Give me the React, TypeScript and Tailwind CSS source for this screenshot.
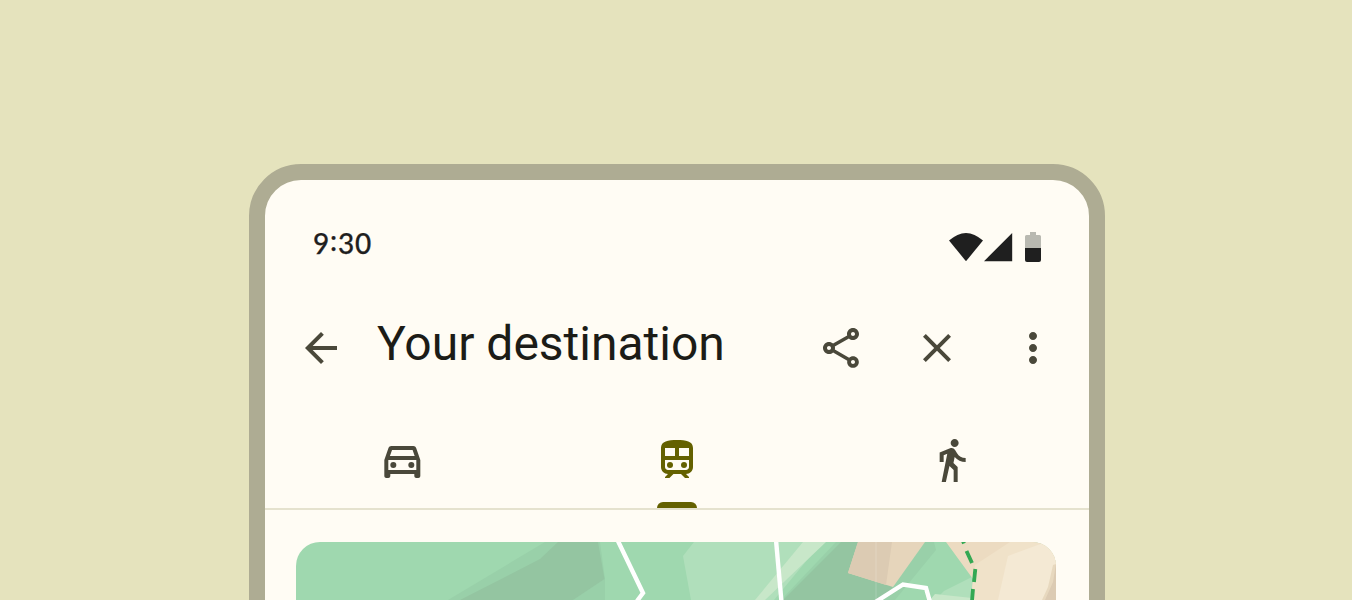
import type { ReactNode } from "react";

function Icon({ children, className = "" }: { children: ReactNode; className?: string }) {
  return (
    <svg viewBox="0 0 24 24" fill="currentColor" className={`size-12 shrink-0 ${className}`}>
      {children}
    </svg>
  );
}

function StatusBar() {
  return (
    <div className="flex h-[132px] items-start justify-between pt-[51px] pr-[47px] pl-12">
      <span className="-mt-[2px] font-['Lato','Roboto',sans-serif] text-[28px] leading-[28px] font-medium tracking-[0.8px] text-[#1f1f1f] [-webkit-text-stroke:0.25px_#1f1f1f]">
        9<span className="inline-block -translate-y-[3px]">:</span>30
      </span>
      <svg viewBox="948 231 94 32" className="h-8 w-[94px]">
        <path d="M949 240.6Q966 225.2 983 240.6L966 261.2Z" fill="#1f1f1f" />
        <path d="M1012.2 233V261.2H984Z" fill="#1f1f1f" />
        <path d="M1030 232H1036V235H1039.5Q1041 235 1041 236.5V248H1025V236.5Q1025 235 1026.5 235H1030Z" fill="#b9b9b1" />
        <path d="M1025 248H1041V260Q1041 262 1039 262H1027Q1025 262 1025 260Z" fill="#1f1f1f" />
      </svg>
    </div>
  );
}

function AppBar() {
  return (
    <div className="flex h-[72px] items-center px-8 text-[#4a483a]">
      <Icon>
        <path d="M20 11H7.83l5.59-5.59L12 4l-8 8 8 8 1.41-1.41L7.83 13H20v-2z" />
      </Icon>
      <h1 className="mb-[9px] ml-8 flex-1 font-['Roboto',sans-serif] text-[48px] leading-[56px] font-normal whitespace-nowrap text-[#1c1c17]">
        Your destination
      </h1>
      <div className="flex gap-12">
        <Icon>
          <path d="M18 16.08c-.76 0-1.44.3-1.96.77L8.91 12.7c.05-.23.09-.46.09-.7s-.04-.47-.09-.7l7.05-4.11c.54.5 1.25.81 2.04.81 1.66 0 3-1.34 3-3s-1.34-3-3-3-3 1.34-3 3c0 .24.04.47.09.7L8.04 9.81C7.5 9.31 6.79 9 6 9c-1.66 0-3 1.34-3 3s1.34 3 3 3c.79 0 1.5-.31 2.04-.81l7.12 4.16c-.05.21-.08.43-.08.65 0 1.61 1.31 2.92 2.92 2.92s2.92-1.31 2.92-2.92-1.31-2.92-2.92-2.92zM18 4c.55 0 1 .45 1 1s-.45 1-1 1-1-.45-1-1 .45-1 1-1zM6 13c-.55 0-1-.45-1-1s.45-1 1-1 1 .45 1 1-.45 1-1 1zm12 7.02c-.55 0-1-.45-1-1s.45-1 1-1 1 .45 1 1-.45 1-1 1z" />
        </Icon>
        <Icon>
          <path d="M19 6.41L17.59 5 12 10.59 6.41 5 5 6.41 10.59 12 5 17.59 6.41 19 12 13.41 17.59 19 19 17.59 13.41 12z" />
        </Icon>
        <Icon>
          <path d="M12 8c1.1 0 2-.9 2-2s-.9-2-2-2-2 .9-2 2 .9 2 2 2zm0 2c-1.1 0-2 .9-2 2s.9 2 2 2 2-.9 2-2-.9-2-2-2zm0 6c-1.1 0-2 .9-2 2s.9 2 2 2 2-.9 2-2-.9-2-2-2z" />
        </Icon>
      </div>
    </div>
  );
}

function Tabs() {
  return (
    <div className="mt-8 grid h-[94px] grid-cols-3 border-b-2 border-[#e5e2ce] text-[#4a483a]">
      <div className="flex justify-center pt-5">
        <Icon>
          <g transform="translate(.16 0)">
            <path d="M18.92 6.01C18.72 5.42 18.16 5 17.5 5h-11c-.66 0-1.21.42-1.42 1.01L3 12v8c0 .55.45 1 1 1h1c.55 0 1-.45 1-1v-1h12v1c0 .55.45 1 1 1h1c.55 0 1-.45 1-1v-8l-2.08-5.99zM6.85 7h10.29l1.04 3H5.81l1.04-3zM19 17H5v-5h14v5z" />
            <circle cx="7.5" cy="14.5" r="1.5" />
            <circle cx="16.5" cy="14.5" r="1.5" />
          </g>
        </Icon>
      </div>
      <div className="flex flex-col items-center justify-between pt-5 text-[#646100]">
        <Icon>
          <path d="M12 2c-4.42 0-8 .5-8 4v9.5C4 17.43 5.57 19 7.5 19L6 20.5v.5h2.23l2-2H14l2 2h2v-.5L16.5 19c1.93 0 3.5-1.57 3.5-3.5V6c0-3.5-3.58-4-8-4zM7.5 17c-.83 0-1.5-.67-1.5-1.5V12h12v3.5c0 .83-.67 1.5-1.5 1.5h-9zm3.5-7H6V6h5v4zm2 0V6h5v4h-5z" />
          <circle cx="8.5" cy="14.5" r="1.5" />
          <circle cx="15.5" cy="14.5" r="1.5" />
        </Icon>
        <span className="h-1.5 w-10 rounded-t-[6px] bg-[#646100]" />
      </div>
      <div className="flex justify-center pt-5">
        <Icon>
          <path
            transform="translate(-.17 0)"
            d="M13.5 5.5c1.1 0 2-.9 2-2s-.9-2-2-2-2 .9-2 2 .9 2 2 2zM9.8 8.9L7 23h2.1l1.8-8 2.1 2v6h2v-7.5l-2.1-2 .6-3C14.8 12 16.8 13 19 13v-2c-1.9 0-3.5-1-4.3-2.4l-1-1.6c-.4-.6-1-1-1.7-1-.3 0-.5.1-.8.1L6 8.3V13h2V9.6l1.8-.7"
          />
        </Icon>
      </div>
    </div>
  );
}

function MapCard() {
  return (
    <div className="mt-8 mr-[33px] ml-[31px] h-[300px] overflow-hidden rounded-t-[24px] bg-[#9fd8af]">
      <svg viewBox="296 542 760 58" className="h-[58px] w-[760px]">
        <path d="M545 542H600L605 579V600H448Z" fill="#99d0a9" />
        <path d="M558 542H598L604.5 579L573 600H460L540 559Z" fill="#94c5a1" />
        <path d="M694 542H822L774 600H691L683 556Z" fill="#b0dfbb" />
        <path d="M803 542H826L765 600H755Z" fill="#c8e7c9" />
        <path d="M836 542H925L890 600H781Z" fill="#99d0a9" />
        <path d="M841 542H875L893 587L882 600H783Z" fill="#94c5a1" />
        <path d="M925 542H934L936 550L895 600H882L893 587Z" fill="#99d0a9" />
        <path d="M858 542H925L893 587L848 573Z" fill="#e6d5bb" />
        <path d="M858 542H892L886 585L848 573Z" fill="#dccbb3" />
        <path d="M875 542H877V600H875Z" fill="#ffffff" opacity=".1" />
        <path d="M972 577L944 591L935 600H972Z" fill="#b0dfbb" />
        <path d="M935 594L972 598V600H930Z" fill="#c8e7c9" />
        <path d="M946 542H1056V600H971L973 579Z" fill="#ecdbc1" />
        <path d="M1010 542H1056V600H971L973 579L975 565Z" fill="#f0e2c9" />
        <path d="M1008 556L1046 542H1056V600H998Z" fill="#f4e9d4" />
        <path d="M1053 565L1048 587L1042 600H1056V564Z" fill="#e7d8be" />
        <path d="M1056 564L1053 582L1045 600H1056Z" fill="#dccbb3" />
        <g fill="none" stroke="#fff" strokeWidth="4.4">
          <path d="M617.5 540L643 593L637 601" />
          <path d="M776 540L781.5 602" />
          <path d="M875.5 602L903 584.5L926 588L930 602" />
        </g>
        <path d="M962.5 540L964 543.5M966.5 551L972 563M975.3 569L974 582M973 589L972 601" fill="none" stroke="#34a853" strokeWidth="3.8" />
      </svg>
    </div>
  );
}

export default function App() {
  return (
    <main className="h-[600px] overflow-hidden bg-[#e5e3bd] pt-[164px] pl-[249px]">
      <div className="h-[700px] w-[856px] rounded-[52px] border-[16px] border-[#aeac93] bg-[#fffcf4]">
        <StatusBar />
        <AppBar />
        <Tabs />
        <MapCard />
      </div>
    </main>
  );
}
